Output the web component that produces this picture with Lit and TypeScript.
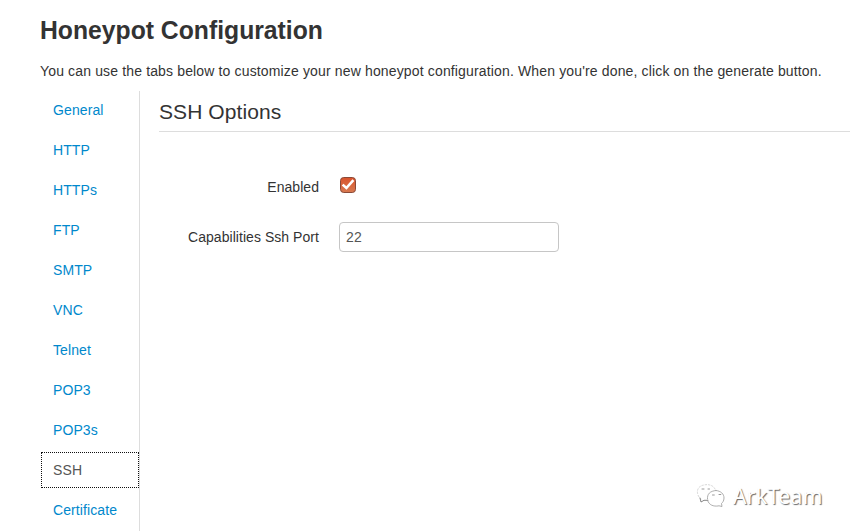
import { LitElement, html, css } from "lit";
import { customElement, state } from "lit/decorators.js";

const TABS = ["General", "HTTP", "HTTPs", "FTP", "SMTP", "VNC", "Telnet", "POP3", "POP3s", "SSH", "Certificate"];

@customElement("app-root")
export class AppRoot extends LitElement {
  @state() private active = "SSH";

  static styles = css`
    :host {
      display: block;
      position: relative;
      box-sizing: border-box;
      width: 850px;
      height: 531px;
      overflow: hidden;
      padding: 10px 0 0 40px;
      background: #fff;
      color: #333;
      font: 14px/20px "Liberation Sans", Arial, sans-serif;
    }
    h1 {
      margin: 0;
      font-size: 26.5px;
      line-height: 40px;
      font-weight: bold;
      white-space: nowrap;
      transform: scaleX(0.933);
      transform-origin: 0 0;
    }
    .intro { margin: 11px 0 10px; white-space: nowrap; letter-spacing: 0.147px; }
    .body { display: flex; height: 440px; }
    nav {
      width: 99px;
      flex: none;
      border-right: 1px solid #ddd;
      display: flex;
      flex-direction: column;
      gap: 2px;
      letter-spacing: 0.1px;
    }
    .tab {
      box-sizing: border-box;
      flex: none;
      height: 38px;
      margin-right: -1px;
      padding: 8px 12px;
      border: 1px solid transparent;
      color: #08c;
      cursor: pointer;
    }
    .tab.active {
      color: #555;
      outline: 1px dotted #111;
      outline-offset: -2px;
    }
    .panel { flex: 1; padding-left: 19px; }
    h2 {
      box-sizing: border-box;
      height: 41px;
      margin: 0 0 45px;
      padding-top: 1px;
      font-size: 21px;
      line-height: 40px;
      font-weight: normal;
      letter-spacing: 0.08px;
      border-bottom: 1px solid #ddd;
    }
    .row { display: flex; height: 20px; margin-bottom: 30px; align-items: center; }
    .label { width: 160px; margin-right: 20px; text-align: right; letter-spacing: 0.05px; }
    .check { display: block; width: 18px; height: 18px; margin-top: -4px; }
    .field {
      box-sizing: border-box;
      width: 220px;
      height: 30px;
      margin: 0;
      padding: 4px 6px;
      border: 1px solid #c6c6c6;
      border-radius: 4px;
      color: #555;
      background: #fff;
      font: inherit;
      letter-spacing: 0.3px;
    }
    .mark {
      position: absolute;
      left: 695px;
      top: 481px;
      display: flex;
      align-items: center;
      gap: 7px;
      height: 30px;
    }
    .mark svg { width: 31px; height: 29px; }
    .brand {
      color: #fff;
      font: 21px/30px "Noto Sans", sans-serif;
      letter-spacing: 0.45px;
      text-shadow: 1px 1px 1px #666;
      white-space: nowrap;
    }
  `;

  render() {
    return html`
      <h1>Honeypot Configuration</h1>
      <div class="intro">You can use the tabs below to customize your new honeypot configuration. When you're done, click on the generate button.</div>
      <div class="body">
        <nav>
          ${TABS.map((t) => html`<a class="tab ${t === this.active ? "active" : ""}" @click=${() => (this.active = t)}>${t}</a>`)}
        </nav>
        <section class="panel">
          <h2>SSH Options</h2>
          <div class="row">
            <span class="label">Enabled</span>
            <svg class="check" viewBox="0 0 18 18">
              <defs>
                <linearGradient id="g" x1="0" y1="0" x2="0" y2="1">
                  <stop offset="0" stop-color="#d9532c" />
                  <stop offset="1" stop-color="#d87a50" />
                </linearGradient>
              </defs>
              <rect x="1.5" y="1.5" width="15" height="15" rx="3.2" fill="url(#g)" stroke="#8a4a38" />
              <path d="M3.6 8.6 L7.4 12 L14.4 4.2" fill="none" stroke="#fff" stroke-width="2.6" />
            </svg>
          </div>
          <div class="row">
            <span class="label">Capabilities Ssh Port</span>
            <input class="field" type="text" value="22" />
          </div>
        </section>
      </div>
      <div class="mark">
        <svg viewBox="0 0 31 29" fill="none" stroke-linecap="round">
          <path d="M20 7 C18 3 13 2 9 3 C4 4 2 7 2.5 11 C3 14 4.5 16 6 17" stroke="#ccc" stroke-width=".8" stroke-dasharray="1.5 1.8" />
          <path d="M5 16 L6 20 L9 18.3 L13 18.3" stroke="#777" stroke-width=".9" />
          <path d="M12.5 17 C12 12 15 9 21 8.5" stroke="#999" stroke-width=".8" />
          <path d="M21 8.5 C26 9 29 12 29 16 C29 19 27.5 20.5 26.5 21.5 L27 24.5 L24 23.8 C18 25 14 22.5 12.8 19" stroke="#999" stroke-width=".8" />
          <path d="M7 7h2M13 7h1.5M17.5 13h1.8M24 12.5h1.8" stroke="#999" />
        </svg>
        <span class="brand">ArkTeam</span>
      </div>
    `;
  }
}
